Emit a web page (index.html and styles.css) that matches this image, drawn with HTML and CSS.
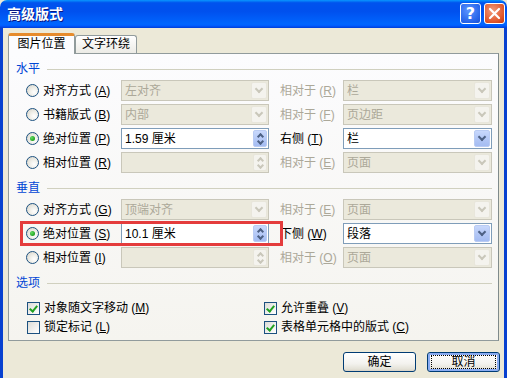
FILE: index.html
```html
<!DOCTYPE html>
<html lang="zh-CN">
<head>
    <meta charset="UTF-8">
    <title>高级版式</title>
    <link rel="stylesheet" href="styles.css">
</head>
<body>
    <div class="dialog">
        <div class="titlebar">
            <span class="title">高级版式</span>
            <span class="tb-btn help">?</span>
            <span class="tb-btn close">
                <svg width="13" height="13" viewBox="0 0 13 13"><path d="M2 2 L11 11 M11 2 L2 11" stroke="#fff" stroke-width="2.2" stroke-linecap="round"/></svg>
            </span>
        </div>
        <div class="client">
            <div class="tabs">
                <span class="tab active">图片位置</span>
                <span class="tab">文字环绕</span>
            </div>
            <div class="panel">
                <div class="head">水平</div>

                <div class="row">
                    <label class="opt"><i class="radio"></i><span>对齐方式 (<u>A</u>)</span></label>
                    <div class="field off"><span>左对齐</span><i class="dd"></i></div>
                    <span class="rel off">相对于 (<u>R</u>)</span>
                    <div class="field off"><span>栏</span><i class="dd"></i></div>
                </div>
                <div class="row">
                    <label class="opt"><i class="radio"></i><span>书籍版式 (<u>B</u>)</span></label>
                    <div class="field off"><span>内部</span><i class="dd"></i></div>
                    <span class="rel off">相对于 (<u>F</u>)</span>
                    <div class="field off"><span>页边距</span><i class="dd"></i></div>
                </div>
                <div class="row">
                    <label class="opt"><i class="radio on"></i><span>绝对位置 (<u>P</u>)</span></label>
                    <div class="field"><span>1.59 厘米</span><i class="spin"><b class="up"></b><b class="down"></b></i></div>
                    <span class="rel">右侧 (<u>T</u>)</span>
                    <div class="field"><span>栏</span><i class="dd"></i></div>
                </div>
                <div class="row">
                    <label class="opt"><i class="radio"></i><span>相对位置 (<u>R</u>)</span></label>
                    <div class="field off"><span></span><i class="spin"><b class="up"></b><b class="down"></b></i></div>
                    <span class="rel off">相对于 (<u>E</u>)</span>
                    <div class="field off"><span>页面</span><i class="dd"></i></div>
                </div>

                <div class="head gap">垂直</div>

                <div class="row">
                    <label class="opt"><i class="radio"></i><span>对齐方式 (<u>G</u>)</span></label>
                    <div class="field off"><span>顶端对齐</span><i class="dd"></i></div>
                    <span class="rel off">相对于 (<u>E</u>)</span>
                    <div class="field off"><span>页面</span><i class="dd"></i></div>
                </div>
                <div class="row">
                    <label class="opt"><i class="radio on"></i><span>绝对位置 (<u>S</u>)</span></label>
                    <div class="field"><span>10.1 厘米</span><i class="spin"><b class="up"></b><b class="down"></b></i></div>
                    <span class="rel">下侧 (<u>W</u>)</span>
                    <div class="field"><span>段落</span><i class="dd"></i></div>
                    <div class="highlight"></div>
                </div>
                <div class="row">
                    <label class="opt"><i class="radio"></i><span>相对位置 (<u>I</u>)</span></label>
                    <div class="field off"><span></span><i class="spin"><b class="up"></b><b class="down"></b></i></div>
                    <span class="rel off">相对于 (<u>O</u>)</span>
                    <div class="field off"><span>页面</span><i class="dd"></i></div>
                </div>

                <div class="head gap">选项</div>

                <div class="checks">
                    <label class="chk"><i class="box on"></i><span>对象随文字移动 (<u>M</u>)</span></label>
                    <label class="chk"><i class="box on"></i><span>允许重叠 (<u>V</u>)</span></label>
                    <label class="chk"><i class="box"></i><span>锁定标记 (<u>L</u>)</span></label>
                    <label class="chk"><i class="box on"></i><span>表格单元格中的版式 (<u>C</u>)</span></label>
                </div>
            </div>
            <div class="buttons">
                <span class="btn">确定</span>
                <span class="btn focus"><span>取消</span></span>
            </div>
        </div>
    </div>
</body>
</html>
```

FILE: styles.css
```css
body {
    margin: 0;
    font-family: "Liberation Sans", "Noto Sans CJK SC", sans-serif;
    font-size: 12px;
    line-height: 14px;
    color: #000;
    background: #ece9d8;
}
.dialog {
    width: 507px;
    height: 378px;
    overflow: hidden;
}
.titlebar {
    height: 28px;
    display: flex;
    align-items: center;
    padding: 0 2px 1px 7px;
    box-sizing: border-box;
    background: linear-gradient(#0997ff 0, #0053ee 10%, #0050ee 40%, #0066ff 86%, #005bff 92%, #003dd7 100%);
    border-radius: 7px 7px 0 0;
}
.title {
    flex: 1;
    color: #fff;
    font-weight: bold;
    font-size: 14px;
    text-shadow: 1px 1px 0 #0a1883;
}
.tb-btn {
    width: 19px;
    height: 19px;
    margin-left: 3px;
    border: 1px solid #fff;
    border-radius: 3px;
    display: flex;
    align-items: center;
    justify-content: center;
    color: #fff;
    font: bold 16px "DejaVu Sans", sans-serif;
}
.help {
    background: radial-gradient(circle at 40% 35%, #5c95ff, #2663e9 70%, #1a50d0);
}
.close {
    background: radial-gradient(circle at 40% 35%, #f39c7c, #e1582d 65%, #c1360f);
}
.client {
    height: 350px;
    padding: 5px 5px 0 5px;
    border-left: 3px solid #0841d0;
    border-right: 3px solid #0841d0;
}
.tabs {
    display: flex;
    align-items: flex-end;
    height: 20px;
}
.tab {
    width: 62px;
    height: 18px;
    box-sizing: border-box;
    border: 1px solid #919b9c;
    border-bottom: none;
    border-radius: 3px 3px 0 0;
    background: linear-gradient(#fff, #ecebe6);
    text-align: center;
    line-height: 17px;
}
.tab.active {
    width: 67px;
    height: 21px;
    margin-bottom: -1px;
    position: relative;
    z-index: 1;
    background: #fcfcfe;
    border-top: 3px solid #ffc83c;
    border-color: #e68b2c #919b9c #919b9c;
    line-height: 17px;
}
.panel {
    height: 288px;
    box-sizing: border-box;
    border: 1px solid #919b9c;
    border-right-color: #7f8a8b;
    background: linear-gradient(#fcfcfe, #f5f4ef);
    padding: 8px 6px 0 0;
}
.head {
    display: flex;
    align-items: center;
    gap: 7px;
    padding-left: 7px;
    height: 14px;
    color: #0046d5;
    margin-bottom: 4px;
}
.head::after {
    content: "";
    flex: 1;
    height: 1px;
    background: #d0d0bf;
}
.head.gap {
    margin-top: 8px;
}
.row {
    display: grid;
    grid-template-columns: 95px 148px 74px 149px;
    align-items: center;
    height: 21px;
    margin-bottom: 3px;
    padding-left: 17px;
    position: relative;
}
.opt, .chk {
    display: flex;
    align-items: center;
    gap: 4px;
    white-space: nowrap;
}
.radio {
    width: 13px;
    height: 13px;
    box-sizing: border-box;
    border: 1px solid #1c5180;
    border-radius: 50%;
    background: radial-gradient(circle at 65% 65%, #fff, #f0efe9 40%, #d4d1c5);
    display: flex;
    align-items: center;
    justify-content: center;
}
.radio.on::after {
    content: "";
    width: 5px;
    height: 5px;
    border-radius: 50%;
    background: radial-gradient(circle at 35% 35%, #62dc62, #21a121 70%);
}
.field {
    height: 21px;
    box-sizing: border-box;
    border: 1px solid #7f9db9;
    background: #fff;
    display: flex;
    align-items: center;
}
.field span {
    flex: 1;
    padding-left: 3px;
    white-space: nowrap;
}
.field.off {
    border-color: #c9c7ba;
    background: #ebe9dc;
    color: #aca899;
}
.rel {
    padding-left: 11px;
    white-space: nowrap;
}
.rel.off {
    color: #aca899;
}
.dd {
    width: 16px;
    height: 17px;
    margin-right: 1px;
    border-radius: 2px;
    background: linear-gradient(#c8d8fc, #b4c8f6 50%, #a4bcf2);
    border: 1px solid #b9cbf3;
    box-sizing: border-box;
    position: relative;
}
.dd::after {
    content: "";
    position: absolute;
    left: 4px;
    top: 3px;
    width: 4px;
    height: 4px;
    border-right: 2px solid #4d6185;
    border-bottom: 2px solid #4d6185;
    transform: rotate(45deg);
}
.off .dd {
    background: #f4f3ee;
    border-color: #e8e6db;
}
.off .dd::after {
    border-color: #c9c7ba;
}
.spin {
    width: 14px;
    height: 17px;
    margin-right: 1px;
    display: flex;
    flex-direction: column;
    border-radius: 2px;
    background: linear-gradient(#c8d8fc, #a4bcf2);
    border: 1px solid #b9cbf3;
    box-sizing: border-box;
    position: relative;
}
.spin b {
    flex: 1;
    position: relative;
}
.spin b::after {
    content: "";
    position: absolute;
    left: 4px;
    width: 3px;
    height: 3px;
    border-left: 2px solid #4d6185;
    border-top: 2px solid #4d6185;
}
.spin .up::after {
    top: 3px;
    transform: rotate(45deg);
}
.spin .down::after {
    top: 0;
    transform: rotate(225deg);
}
.off .spin {
    background: #f4f3ee;
    border-color: #e8e6db;
}
.off .spin b::after {
    border-color: #c9c7ba;
}
.highlight {
    position: absolute;
    left: 11px;
    top: -2px;
    width: 263px;
    height: 25px;
    box-sizing: border-box;
    border: 3px solid #e43c3c;
    pointer-events: none;
}
.checks {
    display: grid;
    grid-template-columns: 237px 1fr;
    row-gap: 5px;
    padding: 7px 0 0 18px;
}
.box {
    width: 13px;
    height: 13px;
    box-sizing: border-box;
    border: 1px solid #1c5180;
    background: linear-gradient(135deg, #dcdcd7, #fff);
    position: relative;
}
.box.on::after {
    content: "";
    position: absolute;
    left: 3px;
    top: 1px;
    width: 3px;
    height: 6px;
    border-right: 2px solid #21a121;
    border-bottom: 2px solid #21a121;
    transform: rotate(40deg);
}
.buttons {
    display: flex;
    justify-content: flex-end;
    gap: 11px;
    padding: 11px 0 0;
    margin-right: -1px;
}
.btn {
    width: 73px;
    height: 20px;
    box-sizing: border-box;
    border: 1px solid #003c74;
    border-radius: 3px;
    background: linear-gradient(#fff, #f3f2ee 60%, #e3e1d6 90%, #d6d0c5);
    display: flex;
    align-items: center;
    justify-content: center;
}
.btn.focus {
    box-shadow: inset 0 0 0 2px #8aacf2;
}
.btn.focus span {
    display: flex;
    justify-content: center;
    width: 63px;
    height: 12px;
    line-height: 12px;
    outline: 1px dotted #000;
}
```
